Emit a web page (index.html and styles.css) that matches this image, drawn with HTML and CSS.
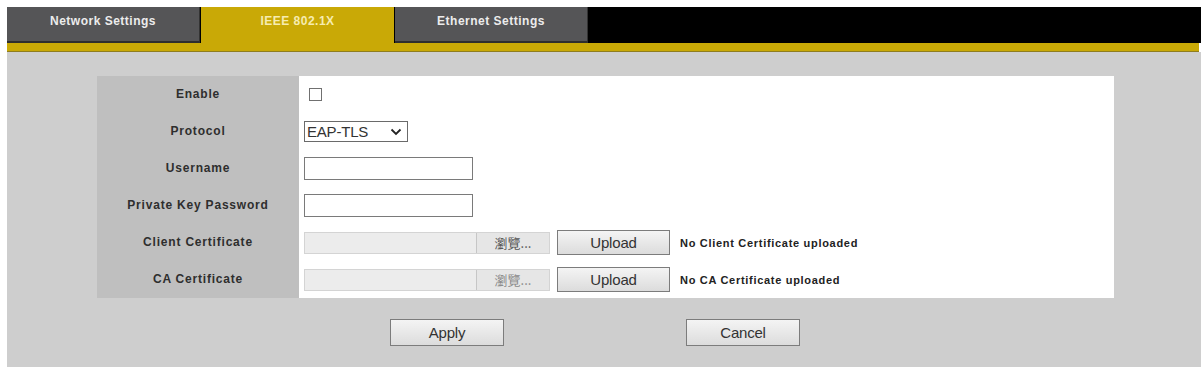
FILE: index.html
```html
<!DOCTYPE html>
<html lang="en">
<head>
    <title>IEEE 802.1X</title>
    <link rel="stylesheet" href="styles.css">
</head>
<body>
<div class="page">
    <div class="tabbar">
        <div class="tab">Network Settings</div>
        <div class="tab active">IEEE 802.1X</div>
        <div class="tab">Ethernet Settings</div>
    </div>
    <div class="band"></div>
    <div class="content">
        <div class="form">
            <div class="labels">
                <div class="label">Enable</div>
                <div class="label">Protocol</div>
                <div class="label">Username</div>
                <div class="label">Private Key Password</div>
                <div class="label">Client Certificate</div>
                <div class="label">CA Certificate</div>
            </div>
            <div class="fields">
                <div class="row"><span class="check"></span></div>
                <div class="row">
                    <div class="select">
                        <span>EAP-TLS</span>
                        <svg width="12" height="8" viewBox="0 0 12 8"><path d="M1.5 1.5 L6 6 L10.5 1.5" fill="none" stroke="#222" stroke-width="1.8"/></svg>
                    </div>
                </div>
                <div class="row"><input class="text" type="text"></div>
                <div class="row"><input class="text" type="password"></div>
                <div class="row">
                    <div class="file"><span class="path"></span><span class="browse">瀏覽...</span></div>
                    <button class="btn upload" type="button">Upload</button>
                    <span class="status">No Client Certificate uploaded</span>
                </div>
                <div class="row">
                    <div class="file"><span class="path"></span><span class="browse dim">瀏覽...</span></div>
                    <button class="btn upload" type="button">Upload</button>
                    <span class="status">No CA Certificate uploaded</span>
                </div>
            </div>
        </div>
        <div class="actions">
            <button class="btn big" type="button">Apply</button>
            <button class="btn big" type="button">Cancel</button>
        </div>
    </div>
</div>
</body>
</html>
```

FILE: styles.css
```css
html {
    background: #ffffff;
}

body {
    margin: 0;
    padding: 0;
    font-family: "Liberation Sans", Arial, sans-serif;
}

.page {
    margin: 7px 2px 0 7px;
}

.tabbar {
    display: flex;
    height: 36px;
    background: #000000;
}

.tab {
    width: 193px;
    margin-right: 1px;
    padding-top: 7px;
    box-sizing: border-box;
    background: #555557;
    border-bottom: 2px solid #2e2e2e;
    border-right: 1px solid #333333;
    color: #ececec;
    font-size: 12px;
    font-weight: bold;
    letter-spacing: 0.5px;
    text-align: center;
}

.tab.active {
    background: #c9a906;
    border: none;
    color: #f6ecb0;
}

.band {
    height: 9px;
    margin-right: 2px;
    background: #c9a906;
    border-bottom: 1px solid #8f7d1e;
    box-sizing: border-box;
}

.content {
    background: #cecece;
    height: 315px;
    padding-top: 24px;
    box-sizing: border-box;
}

.form {
    display: flex;
    margin-left: 90px;
    width: 1017px;
    background: #ffffff;
}

.labels {
    width: 202px;
    background: #bfbfbf;
}

.label {
    height: 37px;
    line-height: 37px;
    text-align: center;
    color: #2e2e2e;
    font-size: 12px;
    font-weight: bold;
    letter-spacing: 0.8px;
}

.fields {
    flex: 1;
    padding-left: 5px;
}

.row {
    display: flex;
    align-items: center;
    height: 37px;
}

.check {
    width: 11px;
    height: 11px;
    margin-left: 5px;
    border: 1px solid #707070;
    background: #ffffff;
}

.select {
    display: flex;
    align-items: center;
    justify-content: space-between;
    width: 104px;
    height: 21px;
    padding: 0 5px 0 2px;
    box-sizing: border-box;
    border: 1px solid #6a6a6a;
    color: #333333;
    font-size: 15px;
    letter-spacing: -0.2px;
}

.text {
    width: 169px;
    height: 23px;
    margin: 0;
    padding: 0;
    box-sizing: border-box;
    border: 1px solid #7a7a7a;
    background: #ffffff;
}

.file {
    display: flex;
    height: 22px;
    width: 246px;
    border: 1px solid #d4d4d4;
    background: #ececec;
    box-sizing: border-box;
}

.path {
    flex: 1;
}

.browse {
    width: 72px;
    border-left: 1px solid #c6c6c6;
    background: #e6e6e6;
    color: #555555;
    font-family: "Noto Sans CJK TC", sans-serif;
    font-size: 13px;
    line-height: 20px;
    text-align: center;
}

.browse.dim {
    color: #8a8a8a;
}

.btn {
    margin: 0;
    padding: 0;
    border: 1px solid #7c7c7c;
    background: linear-gradient(#f4f4f4, #dcdcdc);
    color: #333333;
    font-family: "Liberation Sans", Arial, sans-serif;
    font-size: 15px;
    letter-spacing: -0.2px;
}

.upload {
    width: 113px;
    height: 25px;
    margin-left: 7px;
}

.status {
    margin-left: 10px;
    color: #222222;
    font-size: 11px;
    font-weight: bold;
    letter-spacing: 0.7px;
}

.actions {
    display: flex;
    gap: 182px;
    padding: 21px 0 0 383px;
}

.big {
    width: 114px;
    height: 27px;
}
```
